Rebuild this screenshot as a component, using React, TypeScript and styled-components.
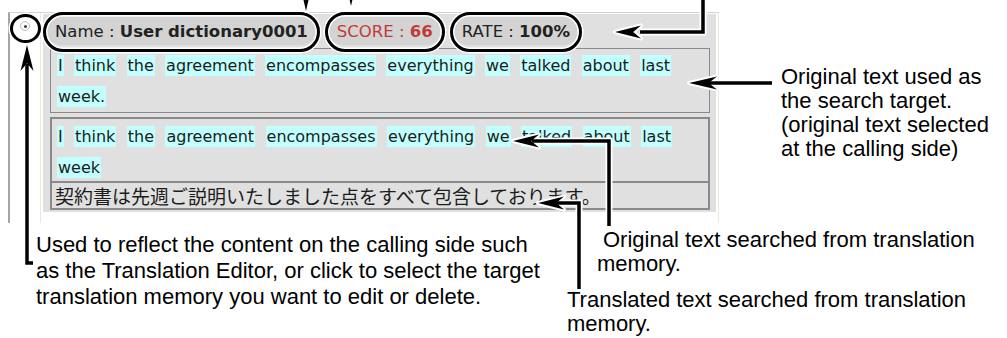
import React from "react";
import styled, { createGlobalStyle } from "styled-components";

/*******************************************************************
 *                  **Utility functions/constants**                *
 *******************************************************************/
const UI_FONT = `"DejaVu Sans", "Noto Sans CJK JP", sans-serif`;
const JP_FONT = `"Noto Sans CJK JP", "DejaVu Sans", sans-serif`;
const NOTE_FONT = `"Liberation Sans", Arial, sans-serif`;

const SOURCE_TEXT =
  "I think the agreement encompasses everything we talked about last week.";
const FOUND_TEXT =
  "I think the agreement encompasses everything we talked about last week";
const FOUND_TRANSLATION =
  "契約書は先週ご説明いたしました点をすべて包含しております。";

type Dir = "left" | "up" | "down";

interface IHead {
  x: number;
  y: number;
  dir: Dir;
  len?: number;
  wide?: number;
}

const LINES = [
  "703,-4 703,32 640,32",
  "772,83 708,83",
  "33,263 27,263 27,64",
  "609,226 609,141 532,141",
  "579,289 579,203 556,203",
];

const HEADS: IHead[] = [
  { x: 615, y: 32, dir: "left" },
  { x: 689, y: 83, dir: "left", len: 28 },
  { x: 27, y: 45, dir: "up" },
  { x: 513, y: 141, dir: "left" },
  { x: 538, y: 203, dir: "left" },
  { x: 306, y: 11, dir: "down", len: 22, wide: 10 },
  { x: 351, y: 6, dir: "down", len: 22, wide: 10 },
];

const headPoints = ({ x, y, dir, len = 26, wide = 13 }: IHead) => {
  const n = len * 0.7;
  const h = wide / 2;
  if (dir === "left") {
    return `${x},${y} ${x + len},${y - h} ${x + n},${y} ${x + len},${y + h}`;
  }
  if (dir === "up") {
    return `${x},${y} ${x - h},${y + len} ${x},${y + n} ${x + h},${y + len}`;
  }
  return `${x},${y} ${x - h},${y - len} ${x},${y - n} ${x + h},${y - len}`;
};

const renderWords = (text: string) =>
  text.split(" ").map((w, i) => (
    <React.Fragment key={i}>
      {i > 0 && " "}
      <Word>{w}</Word>
    </React.Fragment>
  ));

/*******************************************************************
 *                            **Styles**                           *
 *******************************************************************/
const GlobalStyle = createGlobalStyle`
  html, body {
    margin: 0;
    padding: 0;
    background: #fff;
  }
`;

const Page = styled.div`
  position: relative;
  width: 1007px;
  height: 338px;
  overflow: hidden;
  box-sizing: border-box;
  padding-top: 12px;
  background: #fff;
  font-family: ${NOTE_FONT};
  color: #000;
`;

const TopRow = styled.div`
  display: flex;
  align-items: flex-start;
`;

const Frame = styled.div`
  display: flex;
  margin-left: 8px;
  height: 211px;
  box-sizing: border-box;
  border-top: 1px solid #d6d3ca;
  border-left: 2px solid #a4a4a4;
  border-right: 1px solid #ece9d8;
`;

const RadioColumn = styled.div`
  width: 30px;
  display: flex;
  justify-content: center;
  align-items: flex-start;
  padding-top: 8px;
  border-right: 1px solid #ece9d8;
`;

const Radio = styled.span`
  position: relative;
  width: 10px;
  height: 10px;
  box-sizing: border-box;
  border-radius: 50%;
  border: 1.5px solid #bdbdbd;
  background: #fafafa;
  display: flex;
  align-items: center;
  justify-content: center;

  &::before {
    content: "";
    width: 3px;
    height: 3px;
    border-radius: 50%;
    background: #3c3c3c;
  }

  /* annotation ring */
  &::after {
    content: "";
    position: absolute;
    top: -8px;
    bottom: -13px;
    left: -11px;
    right: -12px;
    border: 3px solid #000;
    border-radius: 50%;
    box-shadow: 0 0 0 1.5px #fff, inset 0 0 0 1.5px #fff;
  }
`;

const Container = styled.div`
  margin: 1px 2px 0 2px;
  width: 673px;
  height: 198px;
  background: #e0e0e0;
  display: flex;
  flex-direction: column;
`;

const Header = styled.div`
  height: 34px;
  display: flex;
  align-items: center;
  gap: 13px;
  padding-left: 4px;
`;

const Pill = styled.span<{ $tone?: "red" }>`
  position: relative;
  height: 28px;
  padding: 0 8px;
  border-radius: 14px;
  background: #d3d3d3;
  display: inline-flex;
  align-items: center;
  white-space: pre;
  font-family: ${UI_FONT};
  font-size: 16.5px;
  color: ${(p) => (p.$tone === "red" ? "#c23b3b" : "#222")};

  & b {
    font-weight: bold;
  }

  /* annotation outline */
  &::after {
    content: "";
    position: absolute;
    top: -5px;
    bottom: -7px;
    left: -4px;
    right: -4px;
    border: 3px solid #000;
    border-radius: 22px;
    box-shadow: 0 0 0 1.5px #fff, inset 0 0 0 1.5px #fff;
  }
`;

const Body = styled.div`
  display: flex;
  flex-direction: column;
  gap: 4px;
  padding: 0 6px 0 7px;
`;

const SourcePanel = styled.div`
  height: 65px;
  box-sizing: border-box;
  border: 1px solid #8a8a8a;
  padding: 1px 38px 0 6px;
  line-height: 31px;
  text-align: justify;
  font-family: ${UI_FONT};
  font-size: 16px;
  color: #1c1c1c;
`;

const ResultBox = styled.div`
  border: 2px solid #8a8a8a;
  display: flex;
  flex-direction: column;
`;

const ResultSource = styled.div`
  height: 64px;
  box-sizing: border-box;
  padding: 2px 36px 0 5px;
  line-height: 31px;
  text-align: justify;
  border-bottom: 2px solid #8a8a8a;
  font-family: ${UI_FONT};
  font-size: 16px;
  color: #1c1c1c;
`;

const ResultTarget = styled.div`
  height: 25px;
  line-height: 25px;
  padding-left: 3px;
  white-space: nowrap;
  overflow: hidden;
  font-family: ${JP_FONT};
  font-size: 19px;
  color: #1c1c1c;
`;

const Word = styled.span`
  background: #c2ffff;
  padding: 1px 1px;
`;

const Note = styled.div<{ $left?: number; $indent?: number; $lh?: number }>`
  margin-left: ${(p) => p.$left ?? 0}px;
  text-indent: ${(p) => p.$indent ?? 0}px;
  font-size: 22px;
  line-height: ${(p) => p.$lh ?? 24}px;
  white-space: nowrap;
`;

const RightNote = styled(Note)`
  margin-top: 53px;
`;

const BottomRow = styled.div`
  display: flex;
  margin-top: 5px;
`;

const LeftNote = styled(Note)`
  width: 531px;
  padding-top: 4px;
`;

const MiddleNotes = styled.div`
  display: flex;
  flex-direction: column;
  gap: 12px;
`;

const Overlay = styled.svg`
  position: absolute;
  top: 0;
  left: 0;
  pointer-events: none;
`;

/*******************************************************************
 *                           **Component**                         *
 *******************************************************************/
const App: React.FC = () => (
  <Page>
    <GlobalStyle />

    <TopRow>
      <Frame>
        <RadioColumn>
          <Radio />
        </RadioColumn>

        <Container>
          <Header>
            <Pill>
              Name : <b>User dictionary0001</b>
            </Pill>
            <Pill $tone="red">
              SCORE : <b>66</b>
            </Pill>
            <Pill>
              RATE : <b>100%</b>
            </Pill>
          </Header>

          <Body>
            <SourcePanel>{renderWords(SOURCE_TEXT)}</SourcePanel>
            <ResultBox>
              <ResultSource>{renderWords(FOUND_TEXT)}</ResultSource>
              <ResultTarget>{FOUND_TRANSLATION}</ResultTarget>
            </ResultBox>
          </Body>
        </Container>
      </Frame>

      <RightNote $left={62}>
        Original text used as
        <br />
        the search target.
        <br />
        (original text selected
        <br />
        at the calling side)
      </RightNote>
    </TopRow>

    <BottomRow>
      <LeftNote $left={36} $lh={26}>
        Used to reflect the content on the calling side such
        <br />
        as the Translation Editor, or click to select the target
        <br />
        translation memory you want to edit or delete.
      </LeftNote>

      <MiddleNotes>
        <Note $left={30} $indent={6}>
          Original text searched from translation
          <br />
          memory.
        </Note>
        <Note>
          Translated text searched from translation
          <br />
          memory.
        </Note>
      </MiddleNotes>
    </BottomRow>

    <Overlay width={1007} height={338} viewBox="0 0 1007 338">
      {LINES.map((pts) => (
        <polyline
          key={`h${pts}`}
          points={pts}
          fill="none"
          stroke="#fff"
          strokeWidth={7}
          strokeLinejoin="miter"
        />
      ))}
      {HEADS.map((h, i) => (
        <polygon
          key={`hh${i}`}
          points={headPoints(h)}
          fill="#fff"
          stroke="#fff"
          strokeWidth={4}
          strokeLinejoin="round"
        />
      ))}
      {LINES.map((pts) => (
        <polyline
          key={`l${pts}`}
          points={pts}
          fill="none"
          stroke="#000"
          strokeWidth={3.5}
          strokeLinejoin="miter"
        />
      ))}
      {HEADS.map((h, i) => (
        <polygon key={`a${i}`} points={headPoints(h)} fill="#000" />
      ))}
    </Overlay>
  </Page>
);

export default App;
